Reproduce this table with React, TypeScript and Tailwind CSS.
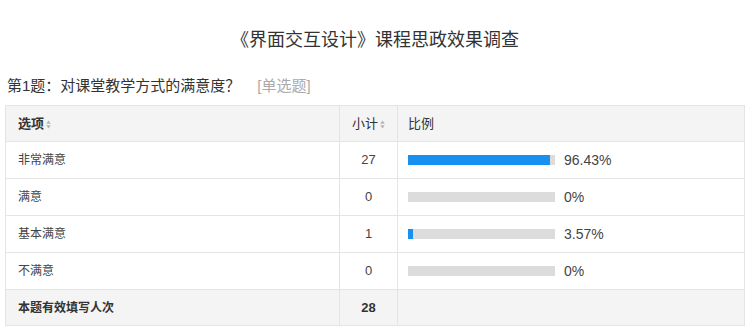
import React from "react";

type Row = { label: string; count: number; pct: number };

const rows: Row[] = [
  { label: "非常满意", count: 27, pct: 96.43 },
  { label: "满意", count: 0, pct: 0 },
  { label: "基本满意", count: 1, pct: 3.57 },
  { label: "不满意", count: 0, pct: 0 },
];

const font = { fontFamily: '"Liberation Sans", "Noto Sans CJK SC", sans-serif' };

function SortIcon() {
  return (
    <svg width="5" height="9" viewBox="0 0 5 9" className="ml-[2px] inline-block align-middle">
      <path d="M2.5 0.5 L4.8 3.8 L0.2 3.8 Z" fill="#b5b5b5" />
      <path d="M2.5 8.5 L4.8 5.2 L0.2 5.2 Z" fill="#b5b5b5" />
    </svg>
  );
}

function Bar({ pct }: { pct: number }) {
  return (
    <div className="flex items-center">
      <div className="h-[10px] w-[147px] bg-[#dcdcdc]">
        {pct > 0 && <div className="h-full bg-[#1890f0]" style={{ width: `${pct}%` }} />}
      </div>
      <span className="ml-[9px] text-[14px] text-[#444]">{pct === 0 ? "0" : pct.toFixed(2)}%</span>
    </div>
  );
}

export default function App() {
  return (
    <div className="h-[331px] w-[750px] overflow-hidden bg-white" style={font}>
      <h1 className="pt-[29px] text-center text-[18px] font-normal leading-[22px] text-[#333]">
        《界面交互设计》课程思政效果调查
      </h1>
      <div className="mt-[25px] pl-[7px] text-[15px] leading-[20px] text-[#333]">
        第1题：对课堂教学方式的满意度？
        <span className="ml-[17px] text-[#aaa]">[单选题]</span>
      </div>
      <table className="ml-[5px] mt-[9px] w-[740px] table-fixed border-collapse text-[12px] text-[#333]">
        <colgroup>
          <col className="w-[334px]" />
          <col className="w-[58px]" />
          <col />
        </colgroup>
        <thead>
          <tr className="h-[36px] bg-[#f4f4f4] text-left text-[13px] font-bold">
            <th className="border border-[#e4e4e4] pl-[12px] font-bold">
              选项
              <SortIcon />
            </th>
            <th className="border border-[#e4e4e4] text-center font-normal">
              小计
              <SortIcon />
            </th>
            <th className="border border-[#e4e4e4] pl-[10px] font-normal">比例</th>
          </tr>
        </thead>
        <tbody>
          {rows.map((r) => (
            <tr key={r.label} className="h-[37px]">
              <td className="border border-[#e4e4e4] pl-[12px] text-[#444]">{r.label}</td>
              <td className="border border-[#e4e4e4] text-center text-[13px] text-[#444]">{r.count}</td>
              <td className="border border-[#e4e4e4] pl-[10px]">
                <Bar pct={r.pct} />
              </td>
            </tr>
          ))}
          <tr className="h-[36px] bg-[#f4f4f4] font-bold">
            <td className="border border-[#e4e4e4] pl-[12px]">本题有效填写人次</td>
            <td className="border border-[#e4e4e4] text-center text-[13px]">28</td>
            <td className="border border-[#e4e4e4]"></td>
          </tr>
        </tbody>
      </table>
    </div>
  );
}
